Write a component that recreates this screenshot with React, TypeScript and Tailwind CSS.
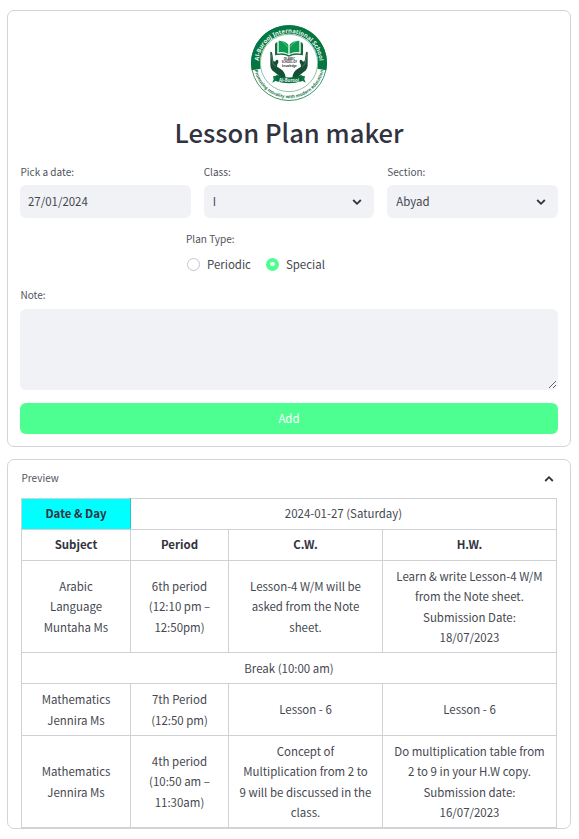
import React from "react";

function Logo() {
  return (
    <svg viewBox="33 30 228 228" className="size-[76px]" fontFamily="Noto Sans, sans-serif">
      <defs>
        <path id="top-arc" d="M57.3 160 A91 91 0 1 1 236.7 160" />
        <path id="bottom-arc" d="M41.5 144 A105.5 105.5 0 0 0 252.5 144" />
      </defs>
      <circle cx="147" cy="144" r="112.5" fill="#fff" stroke="#17804a" strokeWidth="2.5" />
      <path d="M35 166 A114 114 0 1 1 259 166 L232 161 A87 87 0 1 0 62 161 Z" fill="#047642" />
      <circle cx="147" cy="144" r="86" fill="none" stroke="#52a679" strokeWidth="2" />
      <text fontSize="18" fontWeight="700" fill="#e8f5ee" textAnchor="middle">
        <textPath href="#top-arc" startOffset="50%">Al-Burooj International School</textPath>
      </text>
      <text fontSize="13.2" fontWeight="700" fill="#197346" textAnchor="middle">
        <textPath href="#bottom-arc" startOffset="50%">Promoting morality with modern education</textPath>
      </text>
      <path d="M105 86 L112 80 L112 116 Q133 112 147 121 Q161 112 182 116 L182 80 L189 86 L189 121 Q163 116 147 125 Q131 116 105 121 Z" fill="#176c40" />
      <path d="M116 77 Q136 77 145 89 V117 Q132 109 116 112 Z M149 89 Q158 77 178 77 V112 Q162 109 149 117 Z" fill="#0a9c51" />
      <path d="M123 78 Q135 82 144 97 M171 78 Q159 82 150 97" fill="none" stroke="#7bd09e" strokeWidth="2" />
      <path d="M91 111 Q96 109 97 117 L100 137 Q104 142 107 137 Q112 131 115 137 Q116 143 112 148 L111 155 L122 162 Q135 170 137 188 L122 190 Q114 178 103 171 Q91 164 91 150 Z" fill="#174f36" />
      <path d="M203 111 Q198 109 197 117 L194 137 Q190 142 187 137 Q182 131 179 137 Q178 143 182 148 L183 155 L172 162 Q159 170 157 188 L172 190 Q180 178 191 171 Q203 164 203 150 Z" fill="#174f36" />
      <path d="M94 119 L99 147 L108 154 M200 119 L195 147 L186 154" fill="none" stroke="#78a88e" strokeWidth="1.5" />
      <g fill="#333" fontSize="8" fontWeight="700" textAnchor="middle">
        <text x="148" y="134">ISLAMIC</text>
        <text x="148" y="145">SCHOOL OF</text>
        <text x="148" y="156">knowledge</text>
      </g>
      <path d="M99 184 L115 181 V199 L106 198 L97 203 L101 193 Z M195 184 L179 181 V199 L188 198 L197 203 L193 193 Z" fill="#087b43" />
      <path d="M109 180 Q147 195 185 180 V199 Q147 211 109 199 Z" fill="#086b3d" />
      <text x="147" y="200" fontSize="13" fontWeight="700" fill="#e2f3e9" textAnchor="middle">Al-Burooj</text>
    </svg>
  );
}

function Chevron({ up = false }: { up?: boolean }) {
  return (
    <svg viewBox="0 0 10 8" className="h-2 w-2.5" fill="none" stroke="#31333f" strokeWidth="1.8">
      <path d={up ? "M1.2 6 L5 2.2 L8.8 6" : "M1.2 2 L5 5.8 L8.8 2"} />
    </svg>
  );
}

function Field({ label, value, select = false }: { label: string; value: string; select?: boolean }) {
  return (
    <div className="flex-1">
      <div className={`h-[25px] pt-[4px] text-[10.03px] leading-4 text-[#51535d] ${select ? "" : "pl-[0.5px]"}`}>{label}</div>
      <div className={`flex h-[33px] items-center justify-between rounded-md bg-[#f0f2f6] ${select ? "pr-3 pl-[9px]" : "px-2"}`}>
        <span>{value}</span>
        {select && <Chevron />}
      </div>
    </div>
  );
}

function Cell({ lines, span, bold, cyan, raised }: { lines: string[]; span?: number; bold?: boolean; cyan?: boolean; raised?: boolean }) {
  return (
    <td
      colSpan={span}
      className={`border border-[#d0d1d5] p-0 text-center align-middle ${bold ? "font-bold text-[#31333f]" : ""} ${cyan ? "border-r-[#20c8ce] bg-[#00ffff]" : ""} ${raised ? "pb-[2px]" : ""}`}
    >
      {lines.map((line) => (
        <div key={line} className="leading-[20.48px] whitespace-nowrap">{line}</div>
      ))}
    </td>
  );
}

export default function App() {
  return (
    <main className="h-[839px] w-[579px] overflow-hidden bg-white pt-[10px] pl-[7px] font-['Noto_Sans_CJK_SC','Noto_Sans',sans-serif] text-[11.46px] text-[#454751]">
      <section className="h-[437px] w-[564px] rounded-[7px] border border-[#d3d4d7] px-3">
        <div className="flex h-[91px] justify-center pt-[14px]">
          <Logo />
        </div>
        <h1 className="h-[58px] text-center text-[25.6px] leading-[60px] font-medium text-[#31333f]">Lesson Plan maker</h1>
        <div className="flex gap-[13px]">
          <Field label="Pick a date:" value="27/01/2024" />
          <Field label="Class:" value="I" select />
          <Field label="Section:" value="Abyad" select />
        </div>
        <div className="h-[69px] pt-[13px] pl-[166px]">
          <div className="text-[10.03px] leading-4 text-[#51535d]">Plan Type:</div>
          <div className="flex h-[34px] items-center">
            <span className="mr-[7px] ml-px size-[13px] rounded-full border border-[#c5c6cb]" />
            <span className="pt-[2px]">Periodic</span>
            <span className="mr-[7px] ml-[15px] flex size-[13px] items-center justify-center rounded-full bg-[#4dff91]">
              <span className="h-1 w-[5px] rounded-full bg-[#f0f2f6]" />
            </span>
            <span className="pt-[2px]">Special</span>
          </div>
        </div>
        <div className="h-[22px] pl-[0.5px] text-[10.03px] leading-4 text-[#51535d]">Note:</div>
        <textarea className="block h-[81px] w-full resize rounded-md border border-transparent bg-[#f0f2f6]" />
        <button className="mt-[13px] block h-[31px] w-full rounded-md bg-[#4dff91] text-white">Add</button>
      </section>
      <section className="mt-3 h-[370px] w-[564px] rounded-[7px] border border-[#d3d4d7] pl-[13px]">
        <div className="flex h-[38px] items-center justify-between pr-[16px] text-[10.03px] text-[#51535d]">
          <span className="pb-[2px] pl-[0.5px]">Preview</span>
          <Chevron up />
        </div>
        <table className="h-[330px] w-[536px] table-fixed border-collapse">
          <colgroup>
            <col className="w-[109px]" />
            <col className="w-[98px]" />
            <col className="w-[154px]" />
            <col className="w-[174px]" />
          </colgroup>
          <tbody>
            <tr className="h-[31px]">
              <Cell lines={["Date & Day"]} bold cyan raised />
              <Cell lines={["2024-01-27 (Saturday)"]} span={3} raised />
            </tr>
            <tr className="h-[31px]">
              <Cell lines={["Subject"]} bold raised />
              <Cell lines={["Period"]} bold raised />
              <Cell lines={["C.W."]} bold raised />
              <Cell lines={["H.W."]} bold raised />
            </tr>
            <tr className="h-[92px]">
              <Cell lines={["Arabic", "Language", "Muntaha Ms"]} />
              <Cell lines={["6th period", "(12:10 pm –", "12:50pm)"]} />
              <Cell lines={["Lesson-4 W/M will be", "asked from the Note", "sheet."]} />
              <Cell lines={["Learn & write Lesson-4 W/M", "from the Note sheet.", "Submission Date:", "18/07/2023"]} />
            </tr>
            <tr className="h-[31px]">
              <Cell lines={["Break (10:00 am)"]} span={4} />
            </tr>
            <tr className="h-[52px]">
              <Cell lines={["Mathematics", "Jennira Ms"]} />
              <Cell lines={["7th Period", "(12:50 pm)"]} />
              <Cell lines={["Lesson - 6"]} />
              <Cell lines={["Lesson - 6"]} />
            </tr>
            <tr className="h-[92px]">
              <Cell lines={["Mathematics", "Jennira Ms"]} />
              <Cell lines={["4th period", "(10:50 am –", "11:30am)"]} />
              <Cell lines={["Concept of", "Multiplication from 2 to", "9 will be discussed in the", "class."]} />
              <Cell lines={["Do multiplication table from", "2 to 9 in your H.W copy.", "Submission date:", "16/07/2023"]} />
            </tr>
          </tbody>
        </table>
      </section>
    </main>
  );
}
